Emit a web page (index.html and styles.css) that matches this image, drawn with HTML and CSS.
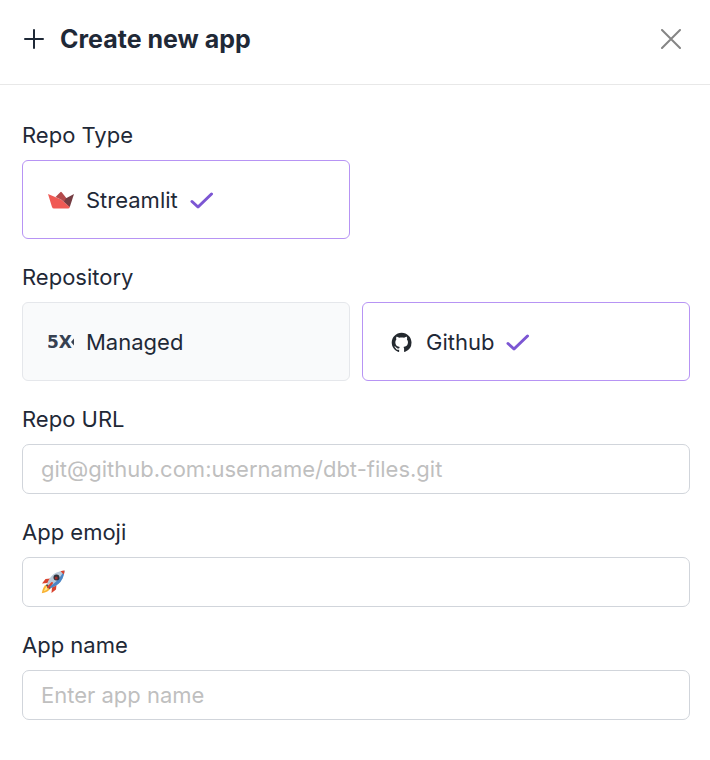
FILE: index.html
```
<!DOCTYPE html>
<html lang="en">
<head>
    <meta charset="utf-8">
    <meta name="viewport" content="width=device-width, initial-scale=1">
    <title>Create new app</title>
    <link rel="stylesheet" href="styles.css">
</head>
<body>
    <header class="header">
        <svg class="plus" viewBox="0 0 20 20" aria-hidden="true"><path d="M10 1v18M1 10h18"/></svg>
        <h1 class="title">Create new app</h1>
        <button class="close" type="button" aria-label="Close">
            <svg viewBox="0 0 20 20" aria-hidden="true"><path d="M1 1l18 18M19 1L1 19"/></svg>
        </button>
    </header>
    <form class="form">
        <fieldset class="field">
            <legend class="label">Repo Type</legend>
            <div class="options">
                <label class="option">
                    <input type="radio" name="repo-type" value="streamlit" checked>
                    <svg class="logo" viewBox="0 0 26 26" aria-hidden="true">
                        <path fill="#f05a55" d="M0 7l13 5.500 8.800 7.500q-.3 1.500-1.800 1.500H6q-1.500 0-2-1.500z"/>
                        <path fill="#b44a4c" d="M7.500 10L12.300 5.200q.7-.7 1.400 0L18.500 11.300 21.800 20 13 12.500z"/>
                        <path fill="#743c42" d="M26 7l-4.200 13L16 14.500l2-3.300z"/>
                    </svg>
                    <span>Streamlit</span>
                    <svg class="check" viewBox="0 0 24 18" aria-hidden="true"><path d="M2 10.500l6 5.500L21.500 3"/></svg>
                </label>
            </div>
        </fieldset>
        <fieldset class="field">
            <legend class="label">Repository</legend>
            <div class="options">
                <label class="option">
                    <input type="radio" name="repository" value="managed">
                    <svg class="logo" viewBox="0 0 26 26" aria-hidden="true">
                        <text class="logo-text" x="-1" y="19">5X</text>
                        <path fill="#374151" d="M26 9.500v7L23 13z"/>
                    </svg>
                    <span>Managed</span>
                    <svg class="check" viewBox="0 0 24 18" aria-hidden="true"><path d="M2 10.500l6 5.500L21.500 3"/></svg>
                </label>
                <label class="option">
                    <input type="radio" name="repository" value="github" checked>
                    <svg class="logo" viewBox="-3 -3 21 21" aria-hidden="true">
                        <path fill="#24292f" d="M8 0C3.58 0 0 3.58 0 8c0 3.54 2.29 6.53 5.47 7.59.4.07.55-.17.55-.38 0-.19-.01-.82-.01-1.49-2.01.37-2.53-.49-2.69-.94-.09-.23-.48-.94-.82-1.13-.28-.15-.68-.52-.01-.53.63-.01 1.08.58 1.23.82.72 1.21 1.87.87 2.33.66.07-.52.28-.87.51-1.07-1.78-.2-3.64-.89-3.64-3.95 0-.87.31-1.59.82-2.15-.08-.2-.36-1.02.08-2.12 0 0 .67-.21 2.2.82.64-.18 1.32-.27 2-.27s1.36.09 2 .27c1.53-1.04 2.2-.82 2.2-.82.44 1.1.16 1.92.08 2.12.51.56.82 1.27.82 2.15 0 3.07-1.87 3.75-3.65 3.95.29.25.54.73.54 1.48 0 1.07-.01 1.93-.01 2.2 0 .21.15.46.55.38A8.01 8.01 0 0 0 16 8c0-4.42-3.58-8-8-8z"/>
                    </svg>
                    <span>Github</span>
                    <svg class="check" viewBox="0 0 24 18" aria-hidden="true"><path d="M2 10.500l6 5.500L21.500 3"/></svg>
                </label>
            </div>
        </fieldset>
        <div class="field">
            <label class="label" for="repo-url">Repo URL</label>
            <input class="control" id="repo-url" type="text" placeholder="git@github.com:username/dbt-files.git">
        </div>
        <div class="field">
            <label class="label" for="app-emoji">App emoji</label>
            <button class="control" id="app-emoji" type="button">
                <svg class="emoji" viewBox="0 0 24 24" role="img" aria-label="Rocket">
                    <path fill="#d9432f" d="M9.500 8.500L4.500 9 1 13.500l5.500-.5zM15.500 14.500l-.5 5L10.500 23l.5-6z"/>
                    <path fill="#f9b233" d="M5.500 14.500Q2 16 .8 23.200 7.500 22 9.500 18.500z"/>
                    <path fill="#ffe98a" d="M5.800 16.300Q3.600 18 2.800 21.200 6 20.400 7.700 18.200z"/>
                    <path fill="#b9c9d8" d="M6 14Q9 5.500 15.500 2.500 19.500.8 23.500.5 23.200 4.500 21.500 8.500 18.500 15 10 18z"/>
                    <path fill="#4b86c6" d="M8 16.500Q16 13 23.500.5 23.200 4.500 21.500 8.500 18.500 15 10 18z"/>
                    <path fill="#d9432f" d="M19.500 1.200Q21.500.6 23.500.5 23.400 2.500 22.900 4.500z"/>
                    <path fill="#4b4f58" d="M6 14l4 4-1.500 1L5 15.500z"/>
                    <circle cx="15.500" cy="7.500" r="3" fill="#30343d"/>
                    <circle cx="15.200" cy="7.900" r="1.500" fill="#a52f2b"/>
                    <path stroke="#d9432f" stroke-width="2" stroke-linecap="round" d="M11 13l-4 4.500"/>
                </svg>
            </button>
        </div>
        <div class="field">
            <label class="label" for="app-name">App name</label>
            <input class="control" id="app-name" type="text" placeholder="Enter app name">
        </div>
    </form>
</body>
</html>
```
FILE: styles.css
```
*, *::before, *::after { box-sizing: border-box; padding: 0; margin: 0; }
body { font-family: Inter, "Liberation Sans", sans-serif; font-size: 22px; line-height: 30px; color: #1f2937; background: #fff; }
svg { display: block; flex: none; fill: none; }

.header { display: flex; align-items: center; gap: 16px; padding: 24px 29px 30px 24px; border-bottom: 1px solid #e8e8e8; }
.plus { width: 20px; height: 20px; stroke: #1f2937; stroke-width: 2; stroke-linecap: round; }
.title { flex: 1; font-size: 25px; line-height: 30px; font-weight: 700; }
.close { background: none; border: 0; cursor: pointer; }
.close svg { width: 20px; height: 20px; stroke: #858585; stroke-width: 2; stroke-linecap: round; }

.form { display: flex; flex-direction: column; gap: 23px; padding: 35px 20px 38px 22px; }
.field { border: 0; min-width: 0; }
.label { display: block; margin-bottom: 10px; }

.options { display: grid; grid-template-columns: 1fr 1fr; gap: 12px; }
.option { display: flex; align-items: center; gap: 12px; height: 79px; padding: 0 25px; background: #f9fafb; border: 1px solid #e5e7eb; border-radius: 6px; cursor: pointer; }
.option input { appearance: none; position: absolute; }
.option:has(input:checked) { background: #fff; border-color: #b794f4; }
.logo { width: 26px; height: 26px; }
.logo-text { fill: #374151; font: bold 17px "DejaVu Sans", sans-serif; }
.check { display: none; width: 24px; height: 18px; stroke: #7c56d3; stroke-width: 3; stroke-linecap: round; stroke-linejoin: round; }
.option input:checked ~ .check { display: block; }

.control { display: flex; align-items: center; width: 100%; height: 50px; padding: 0 18px; font: inherit; color: inherit; background: #fff; border: 1px solid #d1d5db; border-radius: 7px; }
.control::placeholder { color: #bfbfbf; opacity: 1; }
.emoji { width: 24px; height: 24px; }
```
